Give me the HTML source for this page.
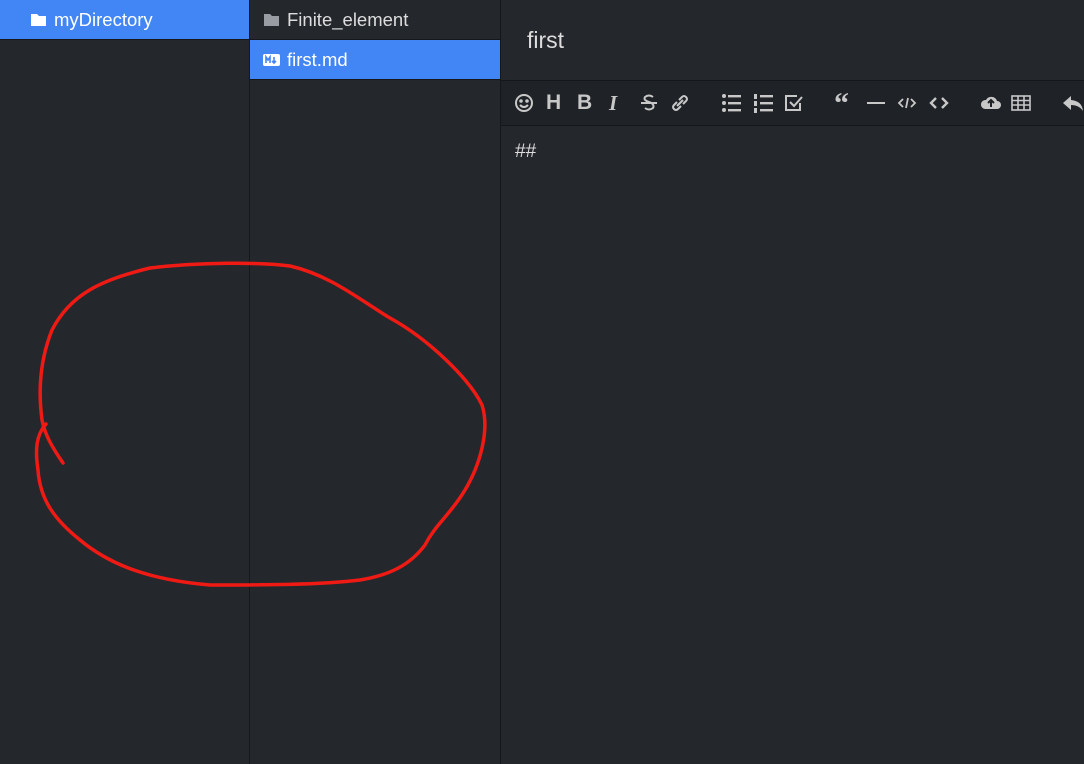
<!DOCTYPE html>
<html><head><meta charset="utf-8"><style>
body{margin:0;width:1084px;height:764px;background:#24282d;font-family:"Liberation Sans",sans-serif;overflow:hidden;position:relative}
.c1{position:absolute;left:0;top:0;width:249px;height:764px;border-right:1px solid #15171a}
.c2{position:absolute;left:250px;top:0;width:250px;height:764px;border-right:1px solid #15171a}
.row{height:39px;display:flex;align-items:center;font-size:18.5px;color:#fff;border-bottom:1px solid #15171a}
.sel{background:#4285f4}
.top{position:absolute;left:501px;top:0;right:0;height:80px;border-bottom:1px solid #15171a}
.tb{position:absolute;left:501px;top:81px;right:0;height:44px;background:#1f2226;border-bottom:1px solid #15171a}
.tb svg{position:absolute;top:12px}
.tb span{position:absolute;top:10px;font-size:21px;font-weight:bold;color:#c8c8c8}
</style></head><body>
<div class="c1"><div class="row sel" style="padding-left:30px"><svg width="17" height="14" viewBox="0 0 17 14"><path d="M1 1h6l2 2h7v10H1z" fill="#fff"/></svg><span style="margin-left:7px">myDirectory</span></div></div>
<div class="c2"><div class="row" style="padding-left:13px;color:#ddd"><svg width="17" height="14" viewBox="0 0 17 14"><path d="M1 1h6l2 2h7v10H1z" fill="#999da3"/></svg><span style="margin-left:7px">Finite_element</span></div>
<div class="row sel" style="padding-left:13px;height:39px"><svg width="17" height="12" viewBox="0 0 17 12"><rect x="0" y="0" width="17" height="12" rx="2" fill="#fff"/><path d="M3 9V3l2 3 2-3v6M11 3v6M9 7l2 2 2-2" stroke="#4285f4" stroke-width="1.6" fill="none"/></svg><span style="margin-left:7px">first.md</span></div></div>
<div class="top"><div style="position:absolute;left:26px;top:27px;font-size:23px;color:#ddd">first</div></div>
<div class="tb">
<svg style="left:13px" width="20" height="20" viewBox="0 0 20 20" fill="none" stroke="#c8c8c8" stroke-width="2"><circle cx="10" cy="10" r="8"/><circle cx="7" cy="8" r=".8" fill="#c8c8c8"/><circle cx="13" cy="8" r=".8" fill="#c8c8c8"/><path d="M6 12q4 4 8 0"/></svg>
<span style="left:45px">H</span><span style="left:76px">B</span><span style="left:108px;font-style:italic;font-family:'Liberation Serif'">I</span>
<svg style="left:138px" width="20" height="20" viewBox="0 0 20 20" fill="none" stroke="#c8c8c8" stroke-width="2"><path d="M14 4q-4-3-8 0q-2 3 4 5q6 2 4 6q-4 3-8 0M2 10h16"/></svg>
<svg style="left:169px" width="20" height="20" viewBox="0 0 20 20" fill="none" stroke="#c8c8c8" stroke-width="2"><path d="M9 7l3-3q2-2 4 0t0 4l-3 3M11 13l-3 3q-2 2-4 0t0-4l3-3M7 13l6-6"/></svg>
<svg style="left:220px" width="20" height="20" viewBox="0 0 20 20" fill="#c8c8c8"><circle cx="3" cy="3" r="2"/><circle cx="3" cy="10" r="2"/><circle cx="3" cy="17" r="2"/><rect x="7" y="2" width="13" height="2.4"/><rect x="7" y="9" width="13" height="2.4"/><rect x="7" y="16" width="13" height="2.4"/></svg>
<svg style="left:252px" width="20" height="20" viewBox="0 0 20 20" fill="#c8c8c8"><rect x="1" y="1" width="3" height="5"/><rect x="1" y="8" width="3" height="5"/><rect x="1" y="15" width="3" height="5"/><rect x="7" y="2" width="13" height="2.4"/><rect x="7" y="9" width="13" height="2.4"/><rect x="7" y="16" width="13" height="2.4"/></svg>
<svg style="left:283px" width="20" height="20" viewBox="0 0 20 20" fill="none" stroke="#c8c8c8" stroke-width="2"><path d="M16 10v7H2V3h11"/><path d="M6 9l4 4 8-9"/></svg>
<span style="left:333px;font-size:30px;top:6px;font-family:'Liberation Serif'">“</span>
<svg style="left:365px" width="20" height="20" viewBox="0 0 20 20"><rect x="1" y="9" width="18" height="2" fill="#c8c8c8"/></svg>
<svg style="left:396px" width="20" height="20" viewBox="0 0 20 20" fill="none" stroke="#c8c8c8" stroke-width="1.8"><path d="M6 6l-4 4 4 4M14 6l4 4-4 4M11 5l-2 10"/></svg>
<svg style="left:428px" width="20" height="20" viewBox="0 0 20 20" fill="none" stroke="#c8c8c8" stroke-width="2.4"><path d="M7 5l-5 5 5 5M13 5l5 5-5 5"/></svg>
<svg style="left:479px" width="22" height="20" viewBox="0 0 22 20"><path d="M5 16h12a4 4 0 0 0 0-8 6 6 0 0 0-11-1 4.5 4.5 0 0 0-1 9z" fill="#c8c8c8"/><path d="M11 14V8M8 10l3-3 3 3" stroke="#1f2226" stroke-width="2" fill="none"/></svg>
<svg style="left:510px" width="20" height="20" viewBox="0 0 20 20" fill="none" stroke="#c8c8c8" stroke-width="1.6"><rect x="1" y="3" width="18" height="14"/><path d="M1 7.5h18M1 12h18M7 3v14M13 3v14"/></svg>
<svg style="left:560px" width="24" height="20" viewBox="0 0 24 20"><path d="M10 3L2 10l8 7v-5q8 0 12 6q-1-10-12-11z" fill="#c8c8c8"/></svg>
</div>
<div style="position:absolute;left:515px;top:141px;font-size:19px;color:#ddd">##</div>
<svg style="position:absolute;left:0;top:0" width="1084" height="764"><path d="M63 463C52 447 45 435 42 420C38 390 40 360 52 330C70 295 100 280 150 268C200 262 260 262 290 266C330 275 360 300 390 318C430 340 470 380 482 405C490 430 480 465 465 490C450 515 435 525 425 545C410 565 390 575 360 580C320 585 260 585 210 585C150 580 110 565 80 540C55 520 40 500 38 470C35 450 36 435 46 424" stroke="#f01a14" stroke-width="3.5" fill="none" stroke-linecap="round"/></svg>
</body></html>
